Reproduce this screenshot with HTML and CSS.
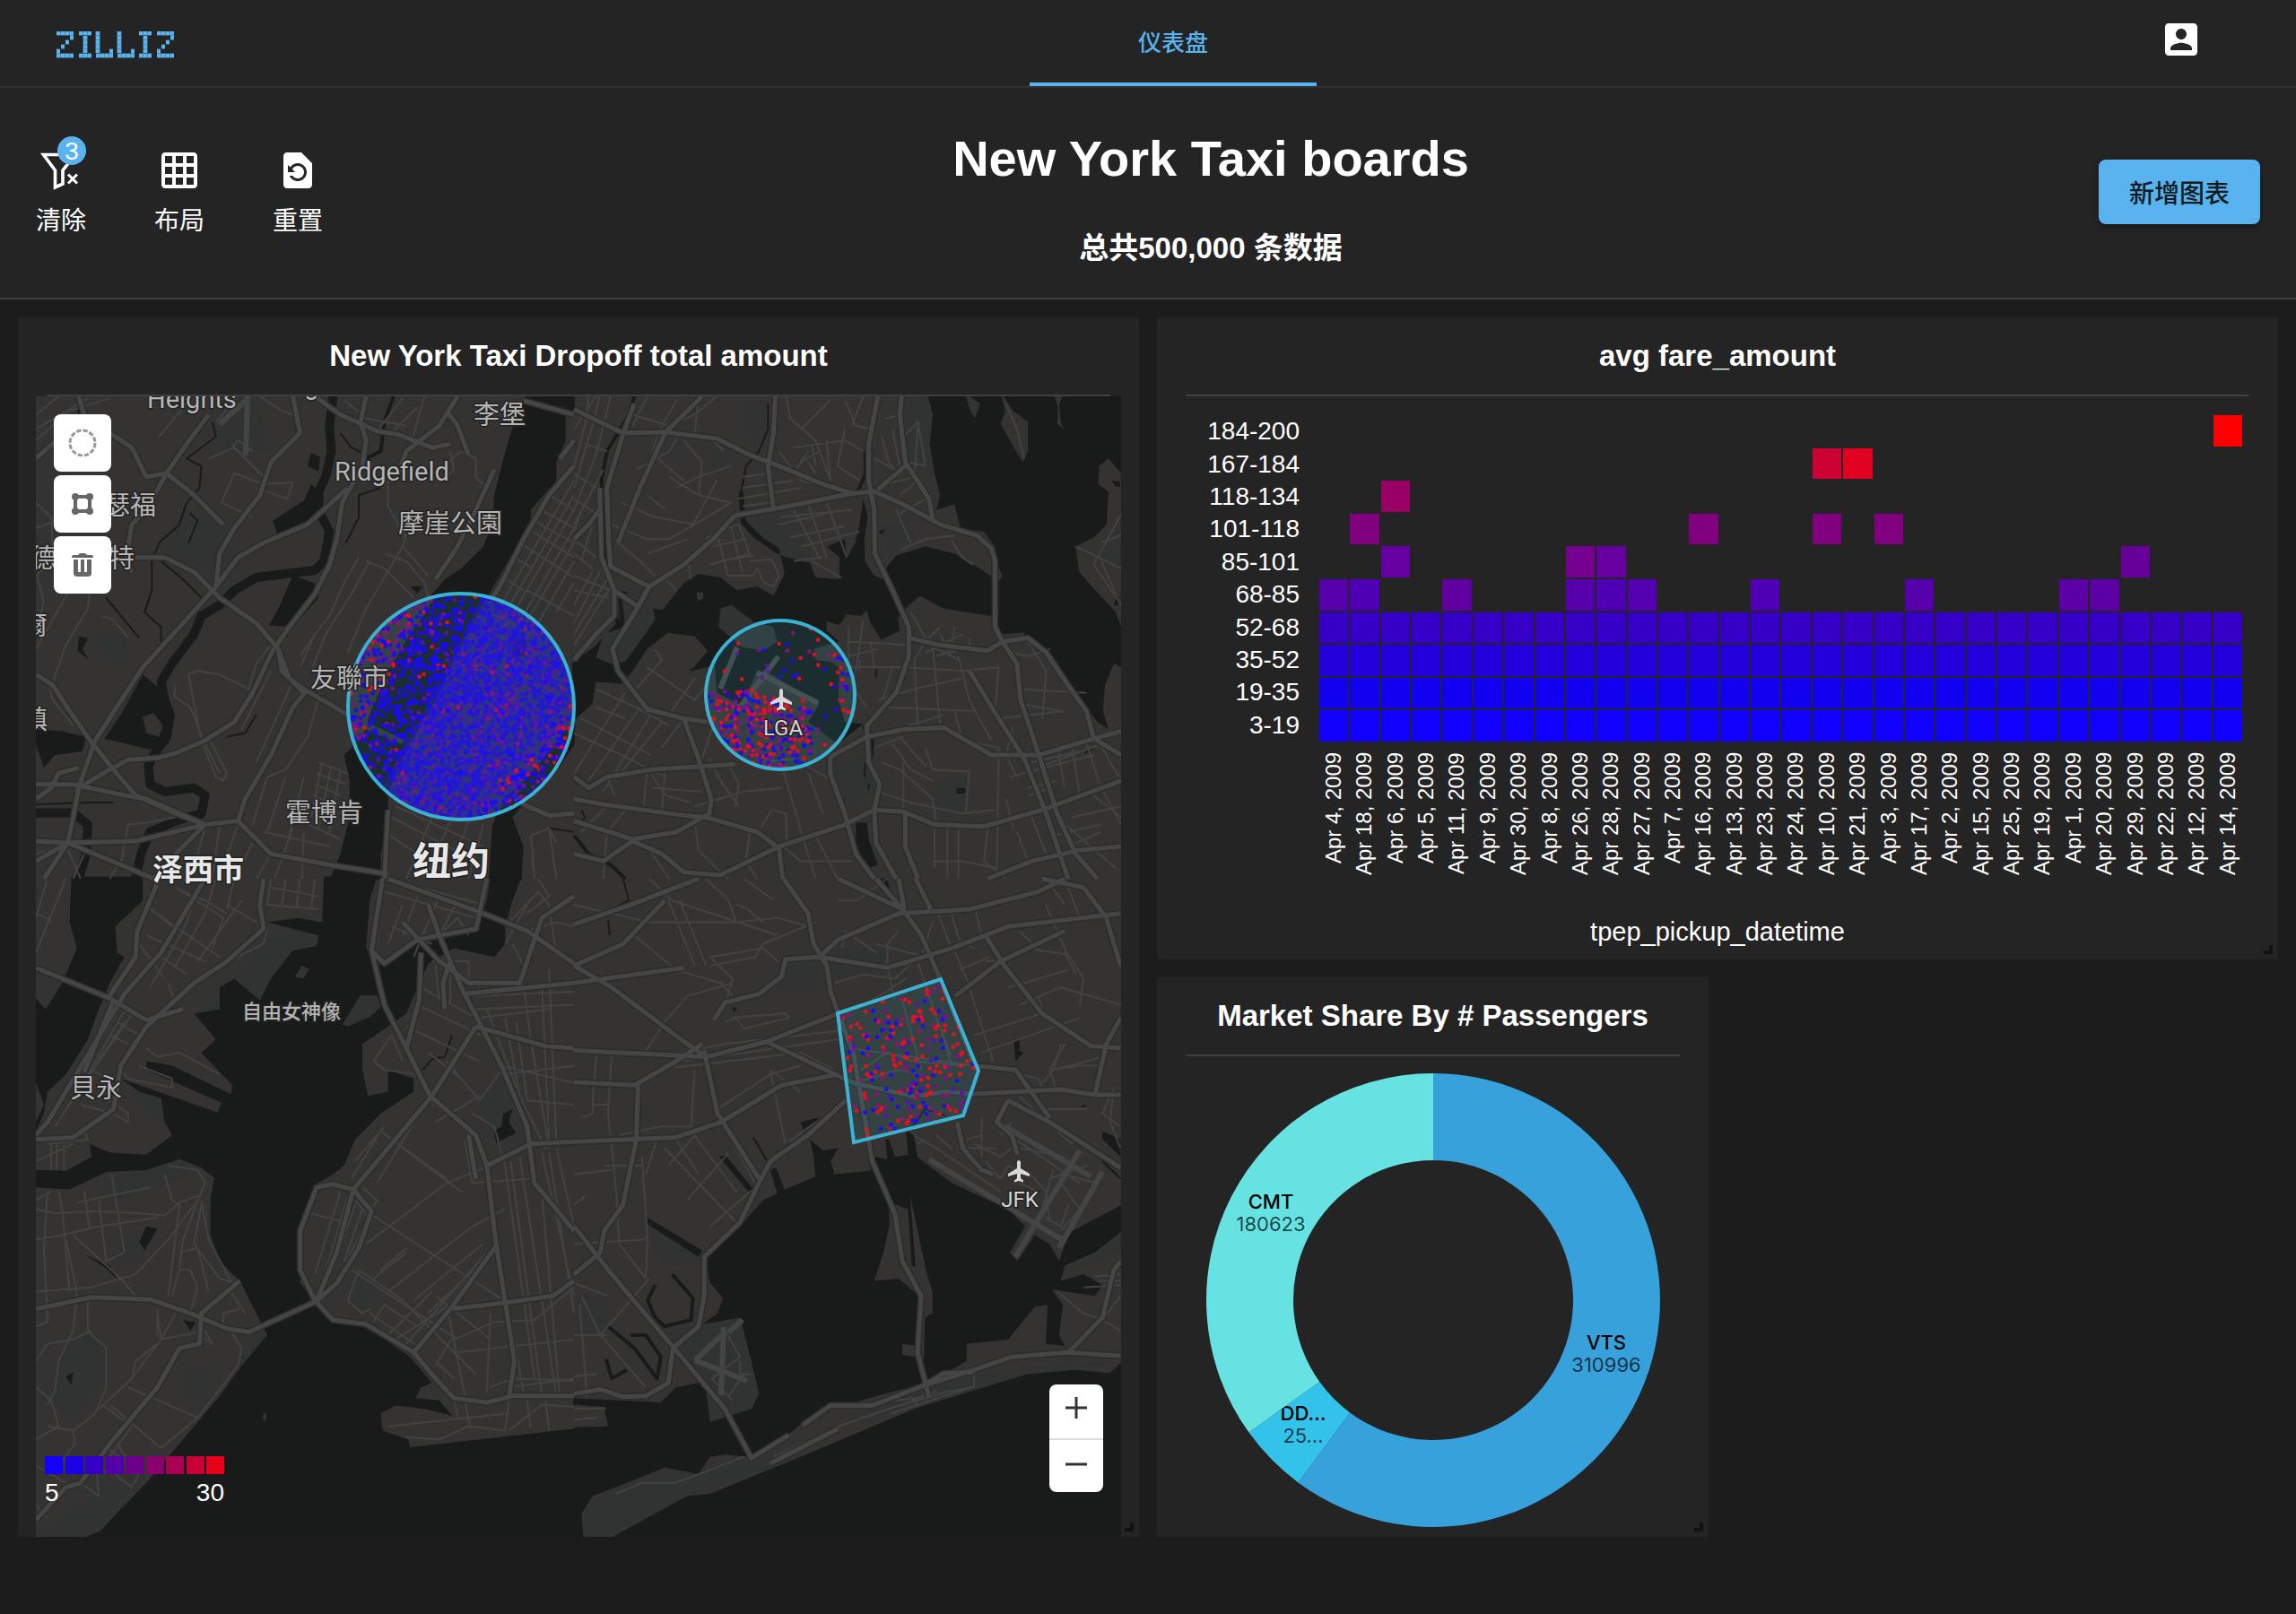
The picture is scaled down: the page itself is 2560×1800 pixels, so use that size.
FILE: index.html
```html
<!DOCTYPE html>
<html lang="zh">
<head>
<meta charset="utf-8">
<meta name="viewport" content="width=device-width, initial-scale=1">
<title>New York Taxi boards</title>
<link rel="stylesheet" href="styles.css">
</head>
<body>
<header class="topbar">
  <a class="logo" href="#" aria-label="ZILLIZ">
    <svg viewBox="0 0 148 30" width="148" height="30" aria-hidden="true">
      <defs>
        <path id="logo-z" d="M0 2h19M0 27h19M15 7h4M10 12h4M5 17h4M0 22h4"/>
        <path id="logo-i" d="M0 2h14M0 27h14M7 5v19"/>
        <path id="logo-l" d="M2 0v24M0 27h19M15 22h4"/>
        <g id="logo-word">
          <use href="#logo-z" x="3"/><use href="#logo-i" x="28"/><use href="#logo-l" x="47"/>
          <use href="#logo-l" x="71"/><use href="#logo-i" x="95"/><use href="#logo-z" x="115"/>
        </g>
      </defs>
      <use href="#logo-word" class="logo-base"/>
      <use href="#logo-word" class="logo-dots"/>
    </svg>
  </a>
  <nav class="tabs"><a class="tab" href="#" aria-current="page">仪表盘</a></nav>
  <button class="icon-button" type="button" aria-label="Account">
    <svg viewBox="0 0 24 24" width="48" height="48" aria-hidden="true"><path d="M3 5v14c0 1.1.89 2 2 2h14c1.1 0 2-.9 2-2V5c0-1.100-.9-2-2-2H5c-1.110 0-2 .9-2 2zm12 4c0 1.660-1.340 3-3 3s-3-1.340-3-3 1.340-3 3-3 3 1.340 3 3zm-9 8c0-2 4-3.100 6-3.100s6 1.100 6 3.100v1H6v-1z"/></svg>
  </button>
</header>

<section class="toolbar">
  <div class="tools">
    <button class="tool" type="button">
      <span class="tool-icon">
        <svg viewBox="0 0 48 48" width="48" height="48" aria-hidden="true">
          <path class="line" d="M4.500 6.500H40L26 24v15l-8.500 4V24z" stroke-width="3.600"/>
          <path class="line" d="M32 28.500l10 10M42 28.500l-10 10" stroke-width="3"/>
        </svg>
        <span class="badge">3</span>
      </span>
      <span>清除</span>
    </button>
    <button class="tool" type="button">
      <span class="tool-icon"><svg viewBox="0 0 24 24" width="48" height="48" aria-hidden="true"><path d="M20 2H4c-1.100 0-2 .9-2 2v16c0 1.100.9 2 2 2h16c1.100 0 2-.9 2-2V4c0-1.100-.9-2-2-2zM8 20H4v-4h4v4zm0-6H4v-4h4v4zm0-6H4V4h4v4zm6 12h-4v-4h4v4zm0-6h-4v-4h4v4zm0-6h-4V4h4v4zm6 12h-4v-4h4v4zm0-6h-4v-4h4v4zm0-6h-4V4h4v4z"/></svg></span>
      <span>布局</span>
    </button>
    <button class="tool" type="button">
      <span class="tool-icon"><svg viewBox="0 0 24 24" width="48" height="48" aria-hidden="true"><path d="M14 2H6c-1.100 0-1.990.9-1.990 2L4 20c0 1.100.89 2 1.990 2H18c1.100 0 2-.9 2-2V8l-6-6zm-2 16c-2.050 0-3.810-1.240-4.580-3h1.710c.63.9 1.680 1.500 2.870 1.500 1.930 0 3.500-1.570 3.500-3.500S13.930 9.500 12 9.500c-1.350 0-2.520.78-3.100 1.900l1.600 1.600h-4V9l1.300 1.300C8.690 8.920 10.230 8 12 8c2.760 0 5 2.240 5 5s-2.240 5-5 5z"/></svg></span>
      <span>重置</span>
    </button>
  </div>
  <div class="heading">
    <h1>New York Taxi boards</h1>
    <h2>总共500,000 条数据</h2>
  </div>
  <button class="add-chart" type="button">新增图表</button>
</section>

<main class="board">
  <article class="card card-map">
    <h3 class="card-title">New York Taxi Dropoff total amount</h3>
    <div class="map">
      <svg class="map-canvas" viewBox="40 442 1210 1272" role="img" aria-label="New York map">
        <defs>
          <clipPath id="clip-midtown"><circle cx="514" cy="788" r="126"/></clipPath>
          <path id="plane" d="M0-12c1.500 0 2 1.500 2 3v6l10 6v3L2 3v5l3 2.500V12.500L0 11l-5 1.500V10.500L-2 8V3l-10 3V3l10-6v-6c0-1.500.5-3 2-3z"/>

          <g id="roads-nw">
            <path d="M1000 250 985 320 1000 370 990 440 935 540 920 640 900 710 860 790 790 880 745 945 690 1060 640 1140 560 1190 480 1225 430 1238 350 1243 290 1275 215 1320 200 1400 185 1470 120 1568"/>
            <path d="M950 500 840 600 720 650 650 690 590 770 500 870 390 990 260 1190 225 1290 210 1330"/>
            <path d="M300 350 360 390 400 470 455 460 530 520 610 600M570 300 510 380 455 460 400 560 360 600 345 690 360 730M820 350 740 430 710 520 640 610 600 680 590 770M800 250 820 350"/>
            <path d="M370 690 450 690 530 730 600 800 700 870 760 940 790 1020 830 1050 950 1120M760 940 770 1000 830 1060"/>
            <path d="M100 1010 145 1040 190 1110 250 1195 310 1270 370 1340 480 1390 560 1420 650 1410 740 1500 900 1530 1060 1555"/>
            <path d="M98 1465 185 1470 370 1465 560 1420 480 1500 420 1568M185 1470 330 1530 420 1568M185 1470 98 1520"/>
            <path d="M1568 440 1500 520 1430 640 1370 760 1340 810M1568 300 1430 262M1568 370 1530 420"/>
            <path d="M860 250 930 300 1030 345 1090 355 1180 390 1230 380M1250 250 1200 330 1110 400 1080 480M1280 410 1250 330 1220 290"/>
            <path d="M840 1050 800 1100 740 1230 670 1350 650 1410M98 1310 200 1310 340 1340 400 1350 560 1420M98 1350 140 1320 160 1280 215 1265"/>
            <path d="M1060 1380 1050 1568M1400 1340 1440 1370 1500 1395 1568 1390M1350 450 1300 560 1250 660 1190 750"/>
            <path d="M215 250 230 300 300 350M98 420 200 330 230 300"/>
          </g>
          <g id="roads-ne">
            <path d="M550 250 545 350 530 440 545 560M0 285 70 320 135 350 250 348 390 365 480 410 560 440 680 490 760 515 820 510 900 545 1000 600 1100 630 1140 665 1150 700V880L1170 920 1240 910 1290 950 1350 1040 1400 1110 1420 1185 1495 1230"/>
            <path d="M440 575 560 555 760 515M830 250 805 380V480L820 560 822 680 870 780 915 880 915 960 880 1060 800 1150 805 1250 835 1310 820 1380 825 1470 880 1568"/>
            <path d="M895 250 890 300 905 430 970 530 980 590M905 440 830 505M440 575 380 640 300 710 205 770 100 715 95 650 90 500 135 350 165 270"/>
            <path d="M70 500 75 690 110 780 175 825 105 940 120 1000 200 1105 300 1130 365 1140M205 770 175 825M300 1130 340 1240 375 1350 370 1390 280 1440 160 1460 0 1410"/>
            <path d="M0 1350 80 1365 300 1395 360 1400 500 1440 560 1485 570 1568M560 1480 740 1420 820 1380 900 1385 985 1420 1120 1425 1280 1380 1495 1300"/>
            <path d="M700 1235V1280L740 1390 770 1500 820 1568M700 1235 800 1180 900 1160 1010 1155 1140 1230 1270 1230 1420 1185 1495 1165"/>
            <path d="M915 910 1000 930 1130 945 1170 920 1210 980 1220 1080 1270 1230 1320 1390 1370 1500 1430 1568M1080 1000 1160 1130 1230 1240 1290 1390 1350 1568"/>
            <path d="M0 1290 40 1320 90 1290 210 1270 440 1255M905 1385V1480L940 1568M1130 1568 1250 1520 1380 1490 1495 1480M0 1500 80 1520 160 1465 240 1500 300 1550 400 1558 560 1480"/>
            <path d="M350 250 250 348 180 500 120 650M110 780V850L60 900 0 970M0 640 40 600 70 560"/>
          </g>
          <g id="roads-sw">
            <path d="M98 990 250 963 410 968 520 1000 620 1035 680 1043 865 972 920 930 980 850 1015 765 965 715 1180 500 1300 340M965 715 920 860 865 970"/>
            <path d="M965 715 910 703 865 710 820 810 820 900 860 970 910 1015 1000 1025 1130 1090 1190 1150 1240 1195 1330 1205 1400 1190 1568 1190"/>
            <path d="M1015 165 1050 290 1110 390 1175 500 1300 590 1330 660 1355 840 1385 1000 1405 1110 1390 1195M1150 170 1145 280 1110 390"/>
            <path d="M98 205 300 275 400 325 500 300M435 0 375 120 370 180 295 275M720 0 710 60 720 115 620 190 530 240 400 340 330 430 310 530 200 595 98 600"/>
            <path d="M560 0 440 170 340 265 130 560 98 590M1045 0 1015 165 1050 195 1140 140 1300 115 1330 0"/>
            <path d="M1060 0 1320 80 1440 120 1568 195M1170 60 1200 130 1260 250 1370 430 1440 570 1460 700 1568 810M1100 100 1200 190 1280 240 1420 240 1480 90 1568 40"/>
            <path d="M1300 340 1490 385 1568 390M1355 845 1230 990 1130 1090M1230 990 1385 975 1510 960 1568 925M1330 660 1450 610 1568 605M1230 190 1210 240 1215 300"/>
            <path d="M98 1475 180 1400 220 1390 300 1300 430 1170 490 1080 545 1070 550 1000 655 925M310 280 230 445M1280 590 1300 690M1265 265 1568 240"/>
          </g>
          <g id="roads-se">
            <path d="M0 1185 70 1175 130 1192 190 1190 250 1160 262 1080 330 1030 345 960 345 870 440 790 490 700 520 650 620 590 720 510"/>
            <path d="M700 310 740 400 760 500 790 650 850 770 870 880 920 960 910 1090 940 1190M0 800 100 910 265 1080 400 1220 470 1333 570 1280"/>
            <path d="M605 1258 680 1212 790 1212 930 1165 1060 1130 1160 1100 1310 1090 1448 1098M930 1165 980 1138 1060 1135M1310 1090 1400 1010 1430 900 1448 880M520 1345 700 1265"/>
            <path d="M0 200 100 250 300 380 350 410M0 395 350 410 510 375 700 310M510 375 740 470 900 500 990 490 1060 495 1290 485 1380 497 1448 497"/>
            <path d="M700 0 870 70 920 130 970 230 1065 440M555 0 620 80 635 150 670 200 680 260 700 310M0 105 150 60 330 0M0 240 290 205"/>
            <path d="M345 395 380 540 490 690M0 605 270 595 390 560 550 475 700 450M170 470 165 600 130 750 80 810 70 860 0 910M0 468 160 475 270 420 340 380"/>
            <path d="M370 325 400 285 490 265 550 225 560 185 650 180 830 205 1000 160 1150 110 1300 95 1448 80M650 180 700 140 860 80 1050 70 1230 30 1300 0"/>
            <path d="M1010 270 1130 190 1300 120M1090 130 1140 200 1240 310 1370 385 1448 390M1060 430 1170 440 1260 550M1150 510 1260 560 1448 665M1015 560 1030 620 1080 670 1110 680M1150 510 1120 560 1160 590 1175 635"/>
            <path d="M1350 20 1410 90 1448 200M1380 497 1410 380 1448 320M860 0 875 70M800 0 870 70M0 200 130 150 240 50M905 0 945 70M1240 0 1350 20"/>
          </g>
        </defs>

        <rect class="land" x="40" y="442" width="1210" height="1272"/>

        <g class="parks">
          <g transform="translate(0 340) scale(.40816)">
            <path d="M500 560 620 600 640 700 560 720 450 660zM1430 800 1510 810 1510 860 1440 870zM260 900 340 900 350 1000 280 960zM660 270 700 260 740 400 640 400 580 380z"/>
          </g>
          <g transform="translate(640 340) scale(.40816)">
            <path d="M470 270 530 260 530 350 490 390 470 330zM905 250H980V460L910 420zM840 610 920 570 930 640 860 690zM470 590 590 590 650 700 560 680zM370 390 430 400 430 440 380 440zM240 370 300 370 300 410 250 400zM700 1250 790 1230 820 1330 750 1370zM990 1300 1070 1290 1080 1390 990 1380zM1440 640 1495 610V720L1440 700z"/>
          </g>
          <g transform="translate(0 980) scale(.40816 .48473)">
            <path d="M640 230 740 120 830 115 870 155 740 230 710 280zM1310 510 1370 440 1430 540 1420 600 1350 610zM540 300 630 240 600 300zM350 480 440 505 450 580 390 530zM560 670 480 650 300 690 260 720 330 740zM650 1100 720 1040 730 1060 640 1150zM98 1510 220 1514 330 1450 400 1370 300 1390 180 1460zM180 1060 260 1040 290 1140 200 1260 140 1200zM970 910 1030 940 1000 1000 950 970zM500 1120 570 1130 560 1200 490 1190zM360 820 430 810 380 880 300 880z"/>
          </g>
          <g transform="translate(640 980) scale(.42088 .48473)">
            <path d="M250 1040 440 1010 490 1185 470 1220 360 1250 340 1160zM560 190 640 180 640 250 540 260zM680 160 830 160 830 200 690 230zM200 790 340 860 350 880 230 890zM20 1460 100 1400 470 1335 600 1330 300 1420 90 1514H25zM700 1240 1000 1150 1330 1115 1448 1110 1330 1130 900 1220zM1380 860 1448 820V850L1300 915zM0 960 90 960 90 1030 30 1060z"/>
          </g>
        </g>

        <g class="water">
          <g transform="translate(0 340) scale(.40816)">
            <path d="M1440 240 1425 275 1395 350 1375 420 1350 520 1345 600 1320 660 1260 720 1215 750 1180 790 1170 830 1120 900 1060 1000 1010 1120 990 1180 940 1230 955 1300 955 1400 930 1500 900 1572H1040V1500L1060 1420V1340L1080 1280 1120 1200 1180 1100 1250 950 1330 800 1400 680 1450 600 1450 560 1520 480V430L1545 370V300L1570 290V240z"/>
            <path d="M1570 1130 1500 1220 1440 1290 1380 1350 1345 1420 1335 1572H1425L1430 1480 1400 1400 1450 1340 1530 1260 1570 1200z"/>
            <path d="M745 590 830 535 850 490 885 520 880 570 840 605 760 635zM760 830 800 740 860 760 870 800 800 880 735 875zM285 1185 330 1120 390 1010 450 1060 460 1200 410 1215zM98 1160 170 1165 235 1180 225 1220 150 1230 120 1265 98 1200zM215 905 240 910 225 940 243 970 212 945zM850 405 875 415 870 455 840 440zM1400 920 1440 915 1430 960 1400 965zM1120 770 1155 768 1140 788z"/>
            <path class="stream" d="M910 250 900 330 905 400 890 470 865 520 870 560 900 620 885 700 860 725 700 745 640 780 600 820 550 850 530 900 470 980 440 1030 450 1080 465 1120 455 1180 420 1230 405 1260 410 1310 450 1330 530 1320 560 1340 550 1390 480 1410 410 1440 385 1500 370 1572M98 1388 200 1388 240 1420 235 1500 215 1572"/>
            <path class="stream thin" d="M1075 250 1050 320 1040 400 1000 420"/>
            <path class="brook" d="M580 320 590 360 510 420 550 440 545 500 510 540 490 600 435 650 415 700 415 780 395 840 440 880 440 920M440 700 500 750 550 800M930 350 960 390 1000 410M1040 500 980 520 980 580 945 650M700 1120 670 1170 620 1180M98 1365 240 1360 310 1360M215 250 215 330M520 570 540 590 515 650M290 800 380 910M1500 1430 1568 1440"/>
          </g>
          <g transform="translate(640 340) scale(.40816)">
            <path d="M965 240 980 300 972 380 985 460 1000 520 990 560 1040 545 1055 610 1120 620 1150 660V690L1170 740 1160 755 1100 715 1040 680 960 660 880 685 855 715 845 750 820 740 795 700 793 640 803 580 790 530 780 600 768 650 745 692 740 640 690 660 725 690 725 750 660 745 645 705 585 690 555 680 490 635 455 595 450 510 462 510 470 590 515 635 560 665 575 735 545 795 500 770 445 780 400 745 340 735 300 760 242 833 205 830 150 785 120 780 125 860 60 930 -5 980V1140L50 1090 60 1030 130 1035 160 1000 200 940 255 897 330 905 365 945 320 1000 385 985 390 1060 460 1095 500 1000 540 1010 670 1090 640 1140 720 1200 790 1145 740 1140 722 1080 725 990 700 975 660 970 655 940 725 920 690 890V865L725 875 745 845 785 850 800 835 810 870 840 915 890 890 885 855 905 830 945 795 1010 830 1140 850 1165 900 1240 895 1250 915 1300 930 1320 920 1300 870 1270 838 1240 850 1230 905 1290 955 1350 1035 1400 1100 1430 1140 1460 1160 1445 1110 1450 1040 1475 980 1495 990V880L1480 840 1420 775 1380 730 1370 660 1420 635 1455 600 1460 510 1432 490 1435 440 1460 420 1495 460V240z"/>
            <path d="M770 1415H800L805 1460 830 1530 800 1540 770 1470zM1045 1320H1068V1335H1045zM832 618 852 612 840 628zM1480 800H1488V820L1475 822zM1470 480 1492 482V497H1478z"/>
            <path class="stream thin" d="M165 250 150 300 90 400 75 480 80 560 85 700 112 780 118 870M790 1150 815 1190 812 1240M0 1450 40 1500 100 1530 140 1568M795 400 797 460 775 510"/>
            <path class="brook" d="M530 270 530 340 505 400 470 440 455 520M795 1250V1290M805 1310V1325M365 950 340 990 315 998M20 1380 30 1400 20 1420M825 995V1020M1395 1225 1420 1210"/>
          </g>
          <g transform="translate(0 980) scale(.40816 .48473)">
            <path d="M195 -5 190 100 210 160 170 240 125 300 98 275V580L120 540 130 490 180 450 240 370 270 300 300 240 340 180 320 170 315 110 390 50V-5z"/>
            <path d="M885 -5 880 100 815 90 730 100 870 130 865 155 800 165 740 230 710 280 640 230 600 250 600 300 530 310 590 370 550 400 635 475 630 495 470 430 400 420V440L605 515 595 538 330 460 380 490 440 505 450 560 470 590 400 635 300 630 245 610 250 640 180 672 98 670V710L190 715 290 675 400 670 490 645 550 665 585 688 575 740V820L600 880 655 925 700 1000 730 1050 660 1120 600 1190 500 1290 400 1390 330 1450 275 1500 220 1520H1570V1265L1120 1308 1115 1290 1045 1270 1040 1230 1080 1212 1160 1220 1235 1235 1200 1200 1135 1195 1150 1170 1180 1160 1120 1100 1050 1060 990 1030 905 1015 865 975 820 930 815 800 860 705 910 680 940 660 970 600 1040 540 1130 490V460L1060 440V490L1005 500 990 440V380L1060 340 1110 310 1130 270 1170 195 1240 160 1350 180 1380 150 1380 110 1400 50 1425 -5H1340L1330 50 1300 120 1200 140 1130 150 1060 195 1030 200 1000 160 1010 50 1030 -5z"/>
            <path d="M380 835 400 800 430 805 395 855zM1350 580 1370 570 1375 540 1400 530 1390 560 1410 585 1355 608zM180 1145 200 1135 195 1165zM500 1015 535 1020 520 1040zM230 865 300 890 320 920 280 890z"/>
            <path class="brook" d="M1235 360 1215 410 1180 415 1155 440M1140 170 1290 150"/>
          </g>
          <g transform="translate(640 980) scale(.42088 .48473)">
            <path d="M395 965 360 930 350 870 440 800 500 740 560 715 640 685 635 640 625 600 660 625 700 620 680 650 690 680 785 672 800 640 830 645 825 600 835 600 850 640 885 635 880 580 900 590 910 640 1000 700 1150 760 1195 800 1155 860 1175 880 1220 820 1260 840 1285 880 1310 815 1452 750V810L1380 860 1300 890 1290 925 1350 910 1400 935 1380 960 1265 945 1295 980 1285 1050 1300 1075 1250 1070 1255 980 1220 985 1150 1060 1040 1070 1040 1110 1000 1130 930 1160 720 1210 640 1230 520 1310 470 1330 400 1325 360 1330 330 1370 240 1355 140 1390 50 1420 20 1460 25 1520H-2V1262L90 1260 80 1215 -2 1210V1195L230 1205 270 1170 330 1160 350 1180 360 1250 470 1220 490 1185 470 1110 440 1010 340 1025 380 1000z"/>
            <path d="M90 1520 300 1420 360 1415 600 1330 900 1220 1200 1140 1330 1130 1420 1138 1452 1110V1520z"/>
            <path d="M1165 370 1180 370 1180 395 1192 400 1170 420zM520 670 535 665 560 720 540 730zM195 780 340 855 330 870 195 795zM385 640 400 635 480 720 470 728zM600 560 650 548 610 585zM800 0 815 30 835 20 830 0zM1400 580 1448 600V640L1400 600zM418 295 432 298 425 308z"/>
            <path class="stream thin" d="M90 1030 160 1080 220 1150 230 1100 190 1050 150 1050M85 1105 100 1150 140 1130M215 935 195 970 215 1010 240 1030 310 1015 315 965 260 910"/>
            <path class="brook" d="M130 0 145 50 90 75 130 70M90 95 95 130M475 595 515 655M890 580 930 530 985 545M1345 525 1355 520M1400 650 1448 690"/>
          </g>
        </g>

        <g class="islands">
          <g transform="translate(640 340) scale(.40816)">
            <path d="M1165 240 1200 290 1240 320 1240 400 1225 430 1205 395 1165 325 1178 290zM1310 240H1340L1325 270 1330 320 1338 340 1320 325 1322 280zM335 785 352 785 355 800 338 810z"/>
            <path class="park" d="M1068 240 1110 270 1095 310 1080 285zM205 775 222 860 180 920 140 975 100 980 60 965 80 900 140 880 130 800 150 785zM395 880 400 830 430 820 490 865 545 880 555 920 520 945 460 935z"/>
          </g>
          <g transform="translate(0 980) scale(.40816 .48473)">
            <path d="M98 470 98 560 120 520zM720 1228 728 1232 726 1248 718 1245zM805 225 825 200 845 208 828 230z"/>
            <path class="park" d="M935 335 985 268 1030 268 1040 295 1010 318 950 340z"/>
          </g>
          <g transform="translate(0 340) scale(.40816)"><path d="M390 1125 420 1115 445 1150 435 1180 400 1170zM1000 1140 1110 1190 1095 1200 990 1155z"/></g>
          <g transform="translate(640 980) scale(.42088 .48473)">
            <path d="M835 745 885 760 895 890 905 895 890 725 920 850 935 910 950 950V1000L930 1010 925 1150 905 1100 870 1095V1070L910 1075 915 960 860 920 795 925 820 860 835 800z"/>
          </g>
        </g>

        <g class="minor">
          <g transform="translate(0 340) scale(.40816)">
            <path d="M98 300 160 250M98 340 240 255M98 370 190 290 300 255M98 540 140 580 145 700 98 740M98 610 150 590M98 940 190 780M98 900 120 810 100 740M245 790 240 830 180 930 140 1040M135 1050 145 1080 200 1150M280 850 310 860 350 910M640 460 720 490 800 485 785 530 700 500M640 460 605 540 690 580M710 250 770 290 800 300M570 420 640 390 700 450 730 480M435 360 500 280 520 250"/>
            <path d="M980 690 940 760 900 850 860 900 820 960M1010 700 960 790 890 900 850 1000M1100 660 1000 830 950 950M1050 680 1110 700 1160 760 1170 800M1000 700 1050 720 1130 800M1120 590 1100 660 1170 740M1060 480 1060 550 1110 640M1200 450 1260 400 1300 420 1300 470 1330 500M1340 480 1300 560M1220 470 1240 450 1230 400M940 260 1000 310 1110 330M1110 420 1160 250M1030 345 1100 255M1060 360 1140 280"/>
            <path d="M540 1000 600 1010 680 1050 700 980 740 930M540 1000 515 1010 530 1090 550 1190 590 1290 610 1300 620 1280 570 1180M475 1070 520 1100 560 1200 600 1280M480 1040 475 1070M640 1150 680 1060M740 1000 660 1160M820 1060 740 1240 660 1360M800 1030 700 1250M870 1080 840 1180 780 1270 730 1290M860 900 820 990M870 1250 950 1280M865 1280 945 1310M860 1310 930 1340M855 1340 920 1370M880 1250 850 1400M905 1260 870 1430M930 1270 900 1440M730 1290 690 1420M780 1290 730 1440M830 1290 780 1490M800 1400 930 1460M720 1440 900 1480M830 1440 825 1568M800 1430 750 1568"/>
            <path d="M330 1530 350 1420 400 1415 480 1400M98 1500 180 1475 220 1568M230 1500 200 1568M560 1430 520 1568M600 1420 580 1568M650 1420 600 1568M690 1470 640 1568M740 1500 700 1568M340 1500 300 1568"/>
            <path d="M1568 480 1350 850M1568 520 1370 860M1568 560 1380 880M1568 610 1400 900M1568 650 1430 880M1568 700 1470 870M1568 760 1520 840M1440 610 1568 690M1420 650 1568 745M1400 690 1450 715M1500 520 1568 560M1480 560 1568 610M1460 590 1568 650M1370 740 1430 780M1440 780 1568 850"/>
            <path d="M1070 1400 1300 1520M1080 1370 1320 1480M1065 1450 1200 1540M1180 1400 1110 1568M1230 1410 1160 1568M1280 1410 1220 1568M1320 1420 1280 1568M1450 1450 1460 1568M1500 1430 1520 1568M1450 1450 1500 1430 1520 1470"/>
            <path d="M650 250 590 320M690 400 650 370 635 390 660 405M540 280 500 250"/>
          </g>
          <g transform="translate(640 340) scale(.40816)">
            <path d="M0 560 60 410 100 250M0 500 50 330 70 250M0 600 80 450M0 440 30 330 40 250M0 340 60 250M30 380 90 400M0 460 60 500M0 530 60 570M0 640 60 690M0 680 50 720M0 740 100 780M0 780 90 800M0 870 70 730M0 900 90 750M0 930 100 770M0 820 50 730M20 560 0 620M50 600 20 700"/>
            <path d="M160 300 260 330 330 300 390 250M170 450 260 400 290 350M130 540 220 580 330 600M100 600 200 640 260 640M260 470 340 520 430 540M120 650 180 700 220 740M200 520 250 560M280 260 230 350 200 450 160 530M200 250 160 330M260 640 380 570 430 540M300 370 350 430 340 520M340 250 330 350M430 440 340 470 280 500M390 480 320 610M230 420 300 480M410 400 380 370M200 680 310 640M310 690 320 750M240 740 280 780"/>
            <path d="M360 640 390 620 450 600 480 680 370 710M380 660 470 640M400 700 490 685M390 620 420 740M430 610 460 730M480 700 540 695 560 740 545 770 520 760 500 720 490 740 420 740M330 680 400 640M560 600 690 570M590 635 740 605M620 660 780 620M600 560 670 690M640 545 690 690M690 540 745 690M560 580 760 560M650 700 730 745M600 700 680 690"/>
            <path d="M580 250 590 310 660 370 700 480M600 390 740 370 790 400M640 400 600 460M650 380 660 440M690 370 700 480M740 340 720 440M620 340 700 260M740 260 770 330 810 340M560 400 620 480 700 500M460 470 540 460M460 500 600 480M450 530 620 500M460 550 540 540M640 430 660 460M620 430 670 400M720 440 780 480M840 360 860 430 890 470M870 340 890 440M820 420 900 460M850 490 930 470 940 320 900 360M940 480 890 520M880 560 920 650M890 570 960 530 980 590M890 670 960 640 1040 630M1030 640 1060 690 1090 710M940 320 960 440 910 430M850 310 900 300M790 250 760 330"/>
            <path d="M1180 270 1210 340 1230 420M1495 570 1420 710 1495 820M1370 660 1495 720M1440 650 1495 630M1440 700 1480 790"/>
            <path d="M60 1050 170 1100 260 1150M60 1100 140 1130M20 1130 210 1230M0 1170 130 1230 250 1290M140 1060 0 1280M180 1100 40 1300M210 1120 80 1330M240 1140 110 1300M200 990 330 1080 360 1040M220 940 240 970 160 1060M330 1020 260 1120M300 1130 240 1210M200 1270 190 1370M250 1260 240 1380M90 1290 110 1340M215 1320 350 1330M210 1280 250 1340 320 1360M20 1440 100 1360M150 1370 90 1440 80 1568M370 1240 400 1300 450 1370M350 1240 380 1150M420 1250 450 1310 440 1370M330 1370 460 1330 570 1320M500 1250 600 1240 690 1290M570 1270 610 1400 620 1440M510 1430 540 1380 580 1390 580 1470M330 1410 340 1490 420 1568M200 1480 260 1568M480 1440 470 1520 500 1568M640 1280 680 1390M620 1440 660 1568M660 1450 720 1568M570 1480 620 1520 760 1520"/>
            <path d="M750 880V1000M770 1000 790 860M750 920 920 930M750 960 830 940M750 990 900 990 1060 1000 1160 990M780 970 780 1000M810 920 820 990M760 1040 800 1100M820 1180 1010 1120M820 1210 900 1180M830 1080 930 1050 1060 1020M860 1100 1100 1110M920 840 960 910M930 970 960 920 1000 880M970 930 1050 970M960 950 1060 900M1000 900 1030 960M1040 880 1030 940M990 960 1060 940M1080 910V950M930 970 940 1170M980 930 1000 1150M1050 960 1080 1080 1140 1190M1160 990 1150 1110M1240 920 1290 1000 1280 1130M1190 950 1240 960 1300 940M1210 1050 1400 1060M1220 1090 1330 1110M1160 1130 1250 1120 1340 1110M1200 1150 1180 1230 1210 1290M1160 1210 1155 1568M1240 1320 1320 1300M1190 1290 1420 1230M1250 1250 1380 1220M1280 1260 1440 1200M1320 1200 1340 1320M1360 1200 1380 1330M1400 1200 1440 1320M1240 1340 1300 1320M1250 1400 1290 1500M1210 1440 1240 1520M1180 1350 1200 1430"/>
            <path d="M840 1250 890 1270 980 1350 990 1420M830 1330 920 1360 1060 1390 1150 1380M960 1210 980 1270 1080 1275 1070 1390M870 1200 920 1270 980 1300M890 1180 960 1260M900 1250 900 1380M1160 1210 1060 1190 1040 1110M870 990 850 1060 840 1080M1430 1190 1495 1300M1440 1320 1495 1420M1420 1340 1495 1400M1130 1430 1120 1520 1180 1568M985 1420V1540M1020 1425V1568M1050 1430V1568M980 1520 1060 1520 1160 1540M1320 1400 1480 1540M1360 1400 1495 1370M1350 1480 1440 1440M1310 1450 1440 1420"/>
          </g>
          <g transform="translate(0 980) scale(.40816 .48473)">
            <path d="M98 170 180 0M98 90 130 0M98 80 140 95M400 130 560 190M400 60 470 110M380 150 450 230M440 180 510 220M460 240 480 290M410 70 600 180M480 20 610 90 580 160M540 30 500 120 410 250M590 0 560 80 480 200M660 50 600 120 540 190M620 60 700 100M740 0 730 60 870 70M740 20 870 40M780 0 770 60M820 0 810 65M860 0 850 70M730 120 720 150 600 200M620 70 640 0M500 30 560 50 620 80M220 450 340 280M240 450 350 290M180 530 370 300M150 570 340 330M320 330 380 360M300 360 350 380M250 440 300 460M220 520 310 540 350 560 350 540 300 510M130 610 240 600 230 580M140 610V670M155 610V670M175 610V670M98 650 200 610M330 440 350 460 470 480 470 460 380 430M400 390 430 410 490 400 600 450"/>
            <path d="M98 760 150 770 260 765 390 770 450 775 490 745 540 730M98 830 170 820 270 800 430 780M98 950 250 940 370 910 460 830 540 740M98 1030 130 1020 120 850 130 720M190 950 170 760 160 720M245 805 230 720M305 680 340 860 290 880 270 740M200 1040 210 950 180 830M240 960 240 1040 290 1080 290 1170 260 1230 200 1270 130 1260M98 1110 130 1070 200 1060 250 1040M98 1170 140 1200 160 1260 98 1290M200 1040 160 1110 150 1180 130 1210M98 1350 180 1390M200 1270 205 1300 170 1340M270 1220 360 1150 440 1060 430 1000M360 1150 370 1110 430 1070M450 680 470 740 490 750 460 960M540 740 500 830 490 900 470 960M550 750 530 840 600 920 640 930M490 860 540 850 570 950M550 740 570 830 640 940M490 900 520 900 540 940 520 1000M540 740 560 700 540 670 460 660M200 820 330 920 380 970M210 745 410 710M98 740 140 720M430 990V1050M480 1000 440 1060 560 1040 580 1070 540 1050M655 990 610 1000 610 1030M630 950 670 1000M350 1170 540 1240M300 1210 440 1310M280 1210 360 1260M440 1310 540 1240 650 1120 660 1080 630 1040M290 1310 380 1360M320 1300 350 1340M360 1260 300 1330M220 1390 270 1420 265 1370 300 1360 360 1400 380 1370M98 1440 130 1470"/>
            <path d="M860 910 930 720M885 920 950 730M910 900 970 750M940 880 990 760M930 910 1000 790M850 770 940 790M970 740 1020 790M990 710 1030 740 1010 770M960 690 1040 580 1070 600M970 650 1050 570M870 700 930 715M1010 770 1385 975M1040 900 1110 850M1100 620 1260 720M1170 510 1310 590M1070 600 1220 690M1000 840 1220 700 1370 650M980 900 1100 970 1300 1140M960 900 1250 1060M1160 520 1030 700M1190 560 1310 500M1290 540 1350 570 1380 660M1020 920 1110 860M1060 950 1290 800 1380 760M1130 970 1320 840M1170 1000 1340 860M1180 1040 1310 880M950 970 980 900M950 970 990 1000 1010 990M1020 1020 1050 980 1140 1030M1080 1060 1230 980M1100 1080 1330 860M1060 1050 1180 950M1190 1120 1240 1050M1190 1110 1240 1150M1190 960 1220 980 1340 1060M1010 1000 1150 1080M1240 1060 1350 1020 1460 1015 1568 940M1250 1090 1568 1060M1390 1170 1568 1150M1330 1180 1340 1000M1220 980 1270 1190M1340 1170 1400 1150 1568 1155"/>
            <path d="M1380 660 1460 1150M1395 650 1480 1190M1420 640 1520 1190M1480 720 1530 1200M1360 850 1430 1180M1500 630 1568 1000M1480 630 1568 960M1520 620 1568 800M1330 300 1410 480M1380 320 1420 500 1490 620M1410 330 1440 510 1568 520M1430 240 1450 370 1500 620M1480 240 1500 600M1500 210 1520 610M1290 270 1568 260M1300 300 1568 290M1310 320 1500 300M1220 200 1310 250M1180 190 1280 190 1280 240M1220 420 1310 510 1370 440M1170 400 1260 460M1110 340 1310 420M1140 290 1340 370M1150 250 1300 320M1200 130 1250 90 1280 130M1100 60 1060 150M1140 40 1100 130M1200 40 1130 180M1250 50 1200 130M1050 30 1300 90M1060 0 1320 60M1070 110 1180 150M1380 110 1470 30 1500 60 1520 180M1470 0 1500 40 1440 80M1400 150 1430 200M1380 150 1440 60M1440 120 1520 100 1568 110M1190 200 1200 280M1230 200 1230 290M1380 450 1568 430M1370 430 1568 470M1270 600 1290 700 1450 690M1020 420 1070 360 1100 420M1020 420 1050 440 1140 450"/>
            <path d="M1060 1260 1390 1230M1110 1285 1200 1290 1280 1260 1380 1270 1390 1200M1240 1200 1250 1235M1270 1200 1285 1265M1390 1270 1480 1210 1568 1215M1440 1200 1450 1265M1490 1200 1500 1270"/>
          </g>
          <g transform="translate(640 980) scale(.42088 .48473)">
            <path d="M0 60 200 100 430 100M250 50 320 200M280 50 350 200M300 100 430 100 540 90 620 110M160 130 270 210 390 240 420 270M360 180 420 230 400 290M360 180 500 160 540 190M360 200 480 180 500 150 640 100M200 0 260 50 540 130M350 0 410 50 430 100M430 60 460 70 500 100M450 0 530 50M240 330 300 270 420 240M180 410 240 330M400 330 430 320 450 345 570 320 560 310 420 320M280 400 400 380 700 350M280 420 450 400 700 370M265 435 600 400 690 440M100 400 90 540 110 700 120 840 190 920 195 830 180 640M120 590 230 570 310 570 320 440M60 400 50 500 50 540 20 550M50 520 90 520M0 680 100 670M80 660 180 660M0 750 30 730M0 840 190 830M0 1050 90 1050M70 1050 200 920M20 960 70 1050 130 1110 190 1170M0 930 90 960M0 1145 60 1140M15 980 35 1195M0 1220 85 1218M0 1245 60 1240M240 620 440 800M310 580 430 720M250 660 340 570M360 800 480 710M300 740 410 630M270 600 330 680M390 560 480 700M520 440 560 610M520 440 600 490M380 530 520 450 600 430M570 605 640 560M220 600 190 680"/>
            <path d="M830 0 750 50 700 50M950 100 920 180 910 190M830 160 830 200 850 280M830 160 830 150 860 120M800 150 930 180M710 160 720 120 800 170M690 240 770 220 850 230 900 190M770 290 880 230M910 190 960 320 1000 410M960 70 1000 160M1000 80 1020 140 1060 160M1060 60 1080 130M1010 170 1040 230 1080 340 1110 420M1090 190 1120 190 1200 160 1310 175 1350 230 1340 290M1300 170 1330 220M1150 250 1310 210M1180 290 1290 250 1448 290M1060 360 1240 310M1080 400 1340 320M1020 210 1100 180M1230 270 1250 320M1250 60 1310 180M1180 120 1240 170M1300 0 1340 90M1250 0 1300 60M1270 440 1400 410 1448 320M1240 470 1270 440 1290 380M1260 440 1340 430 1400 430M1300 380 1260 440 1280 490M1180 450 1230 460 1240 480M1180 500 1250 560 1320 610M1430 480 1420 560 1448 620M1420 500 1400 540 1448 570M1250 530 1360 530M970 340 1000 430M870 280 920 440M740 470 860 440 920 450M730 390 1060 430M760 440 830 400 900 420 1040 430"/>
            <path d="M900 590 960 620 1130 720M910 610 930 600M960 590 1000 620M1040 600 1080 590 1080 640M1040 620 1120 620M1080 550V620M1060 610 1130 640 1160 620M1090 650 1130 690 1150 660 1200 680M1160 560 1130 590M1170 600 1340 700M1180 620 1300 640M1210 680 1250 720 1260 790M1270 670 1240 760M1290 700 1340 760 1290 810M1260 690 1360 660M1180 700 1230 720M1250 780 1290 800 1310 750M1300 680 1380 700"/>
            <path d="M1280 950 1350 1000 1400 1015 1448 1040M1350 940 1448 935M1380 915 1448 910M1390 925 1448 925M1400 1015 1448 960M110 1415 180 1390 270 1390 450 1330M530 1330 700 1260 850 1215 990 1180 1060 1170M800 1205 910 1195 960 1180M840 1230 1060 1168 1060 1130M890 1190 910 1210M400 1040 440 1100 365 1150 420 1200M440 1110V1140H470M410 1190 450 1140"/>
          </g>
        </g>

        <g class="casing">
          <use href="#roads-nw" transform="translate(0 340) scale(.40816)"/>
          <use href="#roads-ne" transform="translate(640 340) scale(.40816)"/>
          <use href="#roads-sw" transform="translate(0 980) scale(.40816 .48473)"/>
          <use href="#roads-se" transform="translate(640 980) scale(.42088 .48473)"/>
        </g>
        <g class="major">
          <use href="#roads-nw" transform="translate(0 340) scale(.40816)"/>
          <use href="#roads-ne" transform="translate(640 340) scale(.40816)"/>
          <use href="#roads-sw" transform="translate(0 980) scale(.40816 .48473)"/>
          <use href="#roads-se" transform="translate(640 980) scale(.42088 .48473)"/>
        </g>
        <g class="runways">
          <path d="M1036 1293 1183 1382M1120 1256 1216 1312M1204 1283 1132 1402M1229 1307 1181 1392M775 1517 808 1486M775 1517 833 1540M807 1480 804 1556M812 1486 828 1472M844 750 912 784M824 790 868 732M803 768 822 722M245 473 275 446M276 442 274 508"/>
        </g>

        <g class="shape-fill">
          <circle cx="514" cy="788" r="126"/>
          <circle cx="870" cy="775" r="83"/>
          <path d="M934 1130 1049 1092 1091 1194 1074 1244 952 1274z"/>
        </g>
        <path class="dense" clip-path="url(#clip-midtown)" d="M545 650 485 770 425 880 500 930 560 900 620 830 660 760 600 640z"/>
        <g id="points"></g>
        <g class="shape-line">
          <circle cx="514" cy="788" r="126"/>
          <circle cx="870" cy="775" r="83"/>
          <path d="M934 1130 1049 1092 1091 1194 1074 1244 952 1274z"/>
        </g>

        <g class="place">
          <text x="164" y="455">Heights</text>
          <text x="298" y="440">Ridgefield Park</text>
          <text x="373" y="536">Ridgefield</text>
          <text x="528" y="473">李堡</text>
          <text x="444" y="594">摩崖公園</text>
          <text x="116" y="574">瑟福</text>
          <text x="34" y="633">德</text>
          <text x="121" y="633">特</text>
          <text x="24" y="708">爾</text>
          <text x="24" y="813">鎮</text>
          <text x="346" y="767">友聯市</text>
          <text x="318" y="917">霍博肯</text>
          <text x="78" y="1224">貝永</text>
        </g>
        <text class="place city" x="170" y="982">泽西市</text>
        <text class="place metro" x="460" y="976">纽约</text>
        <text class="place poi" x="270" y="1136">自由女神像</text>
        <text class="place airport" x="873" y="820">LGA</text>
        <text class="place airport" x="1137" y="1346">JFK</text>
        <use class="plane" href="#plane" x="871" y="780"/>
        <use class="plane" href="#plane" x="1136" y="1306"/>
      </svg>

      <div class="draw-tools">
        <button type="button" aria-label="Draw circle"><svg viewBox="0 0 40 40" width="40" height="40" aria-hidden="true"><circle cx="20" cy="20" r="14" fill="none" stroke="#999" stroke-width="3" stroke-dasharray="5.330 2" /></svg></button>
        <button type="button" aria-label="Draw polygon"><svg viewBox="0 0 40 40" width="40" height="40" aria-hidden="true"><path d="M12 12H28V28H12z" fill="none" stroke="#666" stroke-width="4"/><g fill="#666"><circle cx="12" cy="12" r="4"/><circle cx="28" cy="12" r="4"/><circle cx="12" cy="28" r="4"/><circle cx="28" cy="28" r="4"/></g></svg></button>
        <button type="button" aria-label="Delete"><svg viewBox="0 0 40 40" width="40" height="40" aria-hidden="true"><path fill="#666" d="M17 7h6l2 2h5q2 0 2 3H8q0-3 2-3h5zM10 14h20v15q0 4-4 4H14q-4 0-4-4z"/><path d="M16.500 14v14M23.500 14v14" stroke="#fff" stroke-width="3"/></svg></button>
      </div>

      <div class="legend">
        <div class="legend-scale" id="legend"></div>
        <div class="legend-range"><span>5</span><span>30</span></div>
      </div>

      <div class="zoom">
        <button type="button" aria-label="Zoom in"><svg viewBox="0 0 24 24" width="24" height="24" aria-hidden="true"><path d="M0 12H24M12 0V24"/></svg></button>
        <button type="button" aria-label="Zoom out"><svg viewBox="0 0 24 24" width="24" height="24" aria-hidden="true"><path d="M0 12H24"/></svg></button>
      </div>
    </div>
    <span class="resize"></span>
  </article>

  <article class="card card-heat">
    <h3 class="card-title">avg fare_amount</h3>
    <div class="heat">
      <div class="heat-rows" id="heat-rows"></div>
      <div class="heat-cells" id="heat-cells"></div>
      <div class="heat-days" id="heat-days"></div>
    </div>
    <p class="axis-title">tpep_pickup_datetime</p>
    <span class="resize"></span>
  </article>

  <article class="card card-pie">
    <h3 class="card-title">Market Share By # Passengers</h3>
    <svg class="pie" viewBox="1290 1178 615 536" role="img" aria-label="VTS 310996, CMT 180623">
      <g transform="translate(1598 1450)">
        <path fill="#37a1db" d="M0-253A253 253 0 1 1-150.500 203.400L-92.800 125.400A156 156 0 1 0 0-156z"/>
        <path fill="#33c3ea" d="M-150.500 203.400A253 253 0 0 1-205.500 147.600L-126.700 91A156 156 0 0 0-92.800 125.400z"/>
        <g class="slice-label"><text x="-145" y="134">DD…</text><text class="count" x="-145" y="159">25…</text></g>
        <path fill="#66e2e2" d="M-205.500 147.600A253 253 0 0 1 0-253V-156A156 156 0 0 0-126.700 91z"/>
        <g class="slice-label">
          <text x="193" y="55">VTS</text><text class="count" x="193" y="80">310996</text>
          <text x="-181" y="-102">CMT</text><text class="count" x="-181" y="-77">180623</text>
        </g>
      </g>
    </svg>
    <span class="resize"></span>
  </article>
</main>
<script src="board.js"></script>
</body>
</html>
```
FILE: styles.css
```css
* { box-sizing: border-box; }

body {
  margin: 0;
  min-height: 100vh;
  background: #1c1c1c;
  color: #fff;
  font-family: "Liberation Sans", "Noto Sans CJK SC", sans-serif;
  font-size: 28px;
}

h1, h2, h3, p { margin: 0; }

button {
  border: 0;
  padding: 0;
  background: none;
  color: inherit;
  font: inherit;
  cursor: pointer;
}

svg { display: block; }

/* top bar */
.topbar {
  display: flex;
  align-items: stretch;
  justify-content: space-between;
  height: 98px;
  padding: 0 104px 0 60px;
  background: #242424;
  border-bottom: 2px solid #313131;
}

.logo { display: flex; align-items: center; padding-top: 4px; }
.logo svg { fill: none; stroke: #58b3ee; }
.logo-base { stroke-width: 5; opacity: .75; }
.logo-dots { stroke-width: 4; stroke-dasharray: 4 1; }

.tab {
  display: flex;
  align-items: center;
  justify-content: center;
  width: 320px;
  height: 96px;
  padding-bottom: 2px;
  border-bottom: 4px solid #58b3ee;
  color: #58b3ee;
  font-size: 26px;
  font-weight: 500;
  text-decoration: none;
}

.icon-button { padding-bottom: 8px; }
.icon-button svg, .tool svg { fill: #fff; }

/* toolbar */
.toolbar {
  display: flex;
  align-items: center;
  justify-content: space-between;
  padding: 0 40px;
  background: #242424;
  border-bottom: 2px solid #404040;
}

.tools { display: flex; gap: 76px; }

.tool {
  display: flex;
  flex-direction: column;
  align-items: center;
  gap: 15px;
  width: 56px;
  line-height: 36px;
  white-space: nowrap;
}

.tool-icon { position: relative; }
.tool svg .line { fill: none; stroke: #fff; }

.badge {
  position: absolute;
  top: -14px;
  right: -4px;
  width: 32px;
  height: 32px;
  border-radius: 50%;
  background: #58b3ee;
  font-size: 28px;
  line-height: 33px;
  text-align: center;
}

.heading {
  display: flex;
  flex-direction: column;
  gap: 48px;
  padding: 47px 0 35px;
  text-align: center;
}

.heading h1 { font-size: 56px; line-height: 64px; }
.heading h2 { font-size: 33px; line-height: 40px; }

.add-chart {
  width: 180px;
  height: 72px;
  margin-bottom: 2px;
  border-radius: 8px;
  background: #58b3ee;
  color: #0f1a21;
  font-weight: 500;
  box-shadow: 0 6px 2px -4px rgba(0, 0, 0, .2), 0 4px 4px rgba(0, 0, 0, .14), 0 2px 10px rgba(0, 0, 0, .12);
}

/* board */
.board {
  display: grid;
  grid-template-columns: repeat(4, minmax(0, 1fr));
  grid-template-rows: auto 1fr;
  gap: 20px;
  padding: 20px;
}

.card {
  position: relative;
  display: flex;
  flex-direction: column;
  background: #242424;
}

.card-map { grid-column: span 2; grid-row: span 2; padding: 0 20px; }
.card-heat { grid-column: span 2; }

.card-title {
  margin: 0 32px;
  padding: 23px 0;
  border-bottom: 2px solid #3f3f3f;
  font-size: 33px;
  line-height: 40px;
  text-align: center;
}

.card-map .card-title { margin: 0 12px; }

.resize {
  position: absolute;
  right: 6px;
  bottom: 6px;
  width: 10px;
  height: 10px;
  border-right: 4px solid #121212;
  border-bottom: 4px solid #121212;
}

/* map */
.map { position: relative; }
.map-canvas { width: 100%; height: auto; }
.map-canvas path { vector-effect: non-scaling-stroke; }

.land, .islands { fill: #343332; }
.parks, .park { fill: #303331; }
.water { fill: #191b1a; }
.water .stream, .water .brook { fill: none; stroke: #191b1a; stroke-width: 10px; stroke-linejoin: round; }
.water .thin { stroke-width: 4px; }
.water .brook { stroke-width: 2px; }
.minor { fill: none; stroke: #424242; stroke-width: 2px; stroke-linejoin: round; }
.casing { fill: none; stroke: #2c2c2b; stroke-width: 8px; stroke-linejoin: round; }
.major { fill: none; stroke: #454545; stroke-width: 5px; stroke-linejoin: round; }
.runways { fill: none; stroke: #444; stroke-width: 6px; }

.shape-fill { fill: #3bb2d0; fill-opacity: .12; }
.shape-line { fill: none; stroke: #3bb2d0; stroke-width: 4px; }
.dense { fill: #2d1fc8; fill-opacity: .45; }

.place {
  fill: #b5b5b5;
  stroke: #242424;
  stroke-width: 3px;
  paint-order: stroke;
  font-family: Roboto, "Noto Sans CJK TC", sans-serif;
  font-size: 29px;
}

.city { fill: #e8e8e8; font-family: "Noto Sans CJK SC", sans-serif; font-size: 34px; font-weight: 700; }
.metro { fill: #e8e8e8; font-family: "Noto Sans CJK SC", sans-serif; font-size: 43px; font-weight: 700; }
.poi { font-size: 22px; font-weight: 500; }
.airport { fill: #d5d5d5; font-size: 24px; text-anchor: middle; }
.plane { fill: #d9d9d9; }

.draw-tools {
  position: absolute;
  top: 20px;
  left: 20px;
  display: flex;
  flex-direction: column;
  gap: 4px;
}

.draw-tools button {
  display: flex;
  align-items: center;
  justify-content: center;
  width: 64px;
  height: 64px;
  border-radius: 8px;
  background: #fff;
}

.legend { position: absolute; bottom: 28px; left: 10px; width: 200px; }
.legend-scale { display: flex; justify-content: space-between; }
.legend-scale i { width: 20px; height: 20px; }
.legend-range { display: flex; justify-content: space-between; line-height: 42px; }

.zoom {
  position: absolute;
  right: 20px;
  bottom: 50px;
  width: 60px;
  border-radius: 8px;
  background: #fff;
}

.zoom button {
  display: flex;
  align-items: center;
  justify-content: center;
  width: 60px;
  height: 60px;
}

.zoom button:first-child { height: 62px; padding-bottom: 8px; border-bottom: 2px solid #ddd; }
.zoom button:last-child { height: 58px; padding-bottom: 4px; }
.zoom svg { fill: none; stroke: #333; stroke-width: 3px; }

/* heat map */
.heat {
  display: grid;
  grid-template-columns: 127px minmax(0, 1fr);
  column-gap: 22px;
  row-gap: 12px;
  padding: 21px 40px 0 32px;
}

.heat-rows {
  display: grid;
  grid-auto-rows: 1fr;
  align-items: center;
  text-align: right;
}

.heat-cells {
  display: grid;
  grid-template-columns: repeat(30, minmax(0, 1fr));
  grid-template-rows: repeat(10, 1fr);
  gap: 2px;
  height: 364px;
}

.heat-days {
  grid-column: 2;
  display: grid;
  grid-template-columns: repeat(30, minmax(0, 1fr));
  column-gap: 2px;
  height: 140px;
  font-size: 24px;
}

.heat-days span {
  writing-mode: vertical-rl;
  transform: rotate(180deg);
  text-align: end;
  line-height: 32px;
  white-space: nowrap;
}

.axis-title {
  padding: 43px 0 14px;
  font-size: 29px;
  line-height: 34px;
  text-align: center;
}

/* pie */
.pie { width: 100%; height: auto; }

.slice-label {
  font-family: Inter, sans-serif;
  font-size: 22px;
  font-weight: 500;
  text-anchor: middle;
}

.slice-label .count { font-weight: 400; fill-opacity: .7; }
```
FILE: board.js
```javascript
const ramp = ["#1500ff", "#1e00e6", "#3400c8", "#5300a8", "#6c008c", "#8a006c", "#aa0052", "#c80035", "#e6001a"];

const legend = document.getElementById("legend");
ramp.forEach((color) => {
  const swatch = document.createElement("i");
  swatch.style.background = color;
  legend.append(swatch);
});

/* heat map: rows from the highest fare range to the lowest */
const ranges = ["184-200", "167-184", "118-134", "101-118", "85-101", "68-85", "52-68", "35-52", "19-35", "3-19"];
const days = [4, 18, 6, 5, 11, 9, 30, 8, 26, 28, 27, 7, 16, 13, 23, 24, 10, 21, 3, 17, 2, 15, 25, 19, 1, 20, 29, 22, 12, 14];
const filled = { 6: "#3600c8", 7: "#2400dc", 8: "#1200f0", 9: "#1200ff" };
const sparse = [
  { 29: "#ff0000" },
  { 16: "#cc0033", 17: "#e0001f" },
  { 2: "#990066" },
  { 1: "#800080", 12: "#800080", 16: "#800080", 18: "#800080" },
  { 2: "#6600a0", 8: "#760090", 9: "#6600a0", 26: "#660099" },
  { 0: "#5500aa", 1: "#4f00b4", 4: "#6000a0", 8: "#5500aa", 9: "#4f00b4", 10: "#5200b0", 14: "#4f00b4", 19: "#5500aa", 24: "#5a00a5", 25: "#5a00a5" },
];

const rowBox = document.getElementById("heat-rows");
const cellBox = document.getElementById("heat-cells");
const dayBox = document.getElementById("heat-days");

ranges.forEach((range, row) => {
  const label = document.createElement("span");
  label.textContent = range;
  rowBox.append(label);
  days.forEach((day, column) => {
    const cell = document.createElement("i");
    const color = filled[row] || (sparse[row] && sparse[row][column]);
    if (color) cell.style.background = color;
    cellBox.append(cell);
  });
});

days.forEach((day) => {
  const label = document.createElement("span");
  label.textContent = `Apr ${day}, 2009`;
  dayBox.append(label);
});

/* drop-off points */
let seed = 20090404;
const random = () => {
  seed = (seed * 1664525 + 1013904223) % 4294967296;
  return seed / 4294967296;
};
const points = document.getElementById("points");
const addPoint = (x, y, color, opacity) => {
  const dot = document.createElementNS("http://www.w3.org/2000/svg", "circle");
  dot.setAttribute("cx", x.toFixed(1));
  dot.setAttribute("cy", y.toFixed(1));
  dot.setAttribute("r", 2.4);
  dot.setAttribute("fill", color);
  dot.setAttribute("fill-opacity", opacity);
  points.append(dot);
};
const inCircle = (cx, cy, radius) => {
  const angle = random() * Math.PI * 2;
  const distance = Math.sqrt(random()) * radius;
  return [cx + Math.cos(angle) * distance, cy + Math.sin(angle) * distance];
};
const pick = (red, blue) => {
  const value = random();
  if (value < red) return "#f0101c";
  if (value < red + blue) return "#1a0cf5";
  return ["#5a12b0", "#7a1290", "#9a1270"][Math.floor(random() * 3)];
};

for (let i = 0; i < 3600; i += 1) {
  const [x, y] = inCircle(514, 788, 126);
  const shore = 543 - (y - 666) * 0.52;
  const eastRiver = 660 - (y - 760) * 0.9;
  if (x < shore) {
    if (random() < 0.5) addPoint(x, y, x < shore - 60 ? pick(0.2, 0.5) : pick(0.02, 0.88), 0.85);
  } else if (x > eastRiver && y > 780) {
    if (random() < 0.6) addPoint(x, y, pick(0.1, 0.6), 0.85);
  } else {
    addPoint(x, y, random() < 0.75 ? "#1f12ea" : pick(0.06, 0.3), 0.6);
  }
}

for (let i = 0; i < 900; i += 1) {
  const [x, y] = inCircle(870, 775, 82);
  const south = y > 770 && y > 775 + (x - 850) * 0.3 && x < 905;
  const edge = x > 930 && y < 800;
  const chance = south ? 0.95 : edge ? 0.3 : 0.07;
  if (random() < chance) addPoint(x, y, pick(0.4, 0.35), 0.85);
}

const corners = [[934, 1130], [1049, 1092], [1091, 1194], [1074, 1244], [952, 1274]];
const inside = (x, y) => corners.every(([ax, ay], i) => {
  const [bx, by] = corners[(i + 1) % corners.length];
  return (bx - ax) * (y - ay) - (by - ay) * (x - ax) > 0;
});
for (let i = 0; i < 330; i += 1) {
  const x = 934 + random() * 157;
  const y = 1092 + random() * 182;
  if (inside(x, y)) addPoint(x, y, pick(0.45, 0.2), 0.9);
}
```
